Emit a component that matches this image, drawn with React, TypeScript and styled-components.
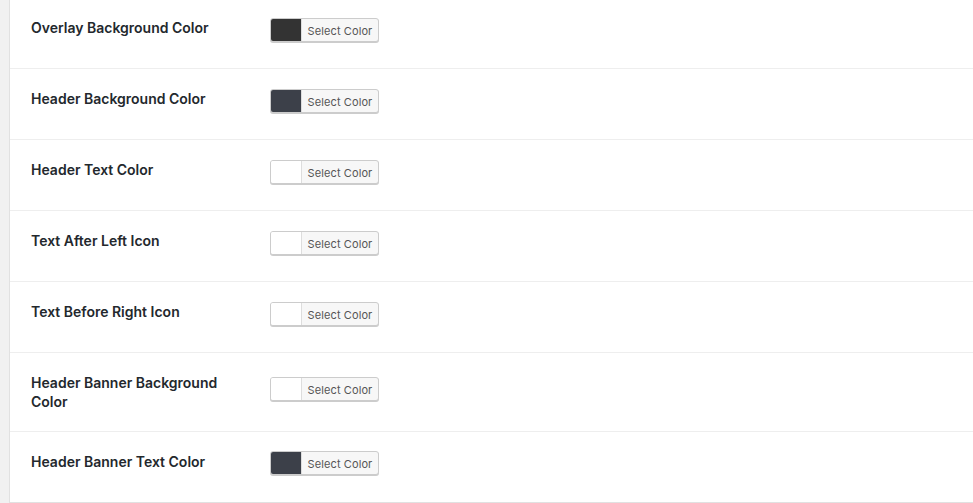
import styled, { createGlobalStyle } from "styled-components";

const GlobalStyle = createGlobalStyle`
  html, body {
    margin: 0;
    padding: 0;
    background: #f1f1f1;
  }
  body {
    font-family: Inter, "Open Sans", "Liberation Sans", sans-serif;
    color: #23282d;
  }
`;

const Page = styled.div`
  display: flex;
  height: 503px;
  overflow: hidden;
`;

const SideStrip = styled.div`
  width: 9px;
  flex-shrink: 0;
  background: #f1f1f1;
  border-right: 1px solid #e1e1e1;
`;

const Panel = styled.div`
  flex: 1;
  align-self: flex-start;
  background: #fff;
  margin-top: -2px;
  border-bottom: 1px solid #e1e1e1;
`;

const Control = styled.div`
  display: flex;
  align-items: center;
  padding-bottom: 6px;
`;

const Row = styled.div`
  display: flex;
  border-bottom: 1px solid #eeeeee;
  min-height: 70px;
  &:last-child {
    border-bottom: none;
  }
  &:last-child ${Control} {
    padding-bottom: 8px;
  }
`;

const Label = styled.div`
  width: 200px;
  padding: 20px 39px 20px 21px;
  font-size: 14px;
  font-weight: 600;
  line-height: 19px;
  color: #23282d;
`;

const PickerButton = styled.button`
  display: flex;
  align-items: stretch;
  height: 24px;
  width: 109px;
  padding: 0;
  margin: 0;
  border: 1px solid #cccccc;
  border-radius: 3px;
  background: #f7f7f7;
  box-shadow: 0 1px 0 #cccccc;
  overflow: hidden;
  cursor: pointer;
`;

const Swatch = styled.span<{ $color: string }>`
  width: 30px;
  background: ${(p) => p.$color};
  border-right: 1px solid #dddddd;
`;

const PickerText = styled.span`
  flex: 1;
  display: flex;
  align-items: center;
  justify-content: center;
  font-family: Inter, "Open Sans", "Liberation Sans", sans-serif;
  font-size: 11px;
  letter-spacing: 0.1px;
  color: #555555;
  padding-top: 1px;
`;

const settings = [
  { label: "Overlay Background Color", color: "#333333" },
  { label: "Header Background Color", color: "#3c4049" },
  { label: "Header Text Color", color: "#ffffff" },
  { label: "Text After Left Icon", color: "#ffffff" },
  { label: "Text Before Right Icon", color: "#ffffff" },
  { label: "Header Banner Background Color", color: "#ffffff" },
  { label: "Header Banner Text Color", color: "#3c4049" },
];

export default function App() {
  return (
    <>
      <GlobalStyle />
      <Page>
        <SideStrip />
        <Panel>
          {settings.map((s) => (
            <Row key={s.label}>
              <Label>{s.label}</Label>
              <Control>
                <PickerButton type="button">
                  <Swatch $color={s.color} />
                  <PickerText>Select Color</PickerText>
                </PickerButton>
              </Control>
            </Row>
          ))}
        </Panel>
      </Page>
    </>
  );
}
